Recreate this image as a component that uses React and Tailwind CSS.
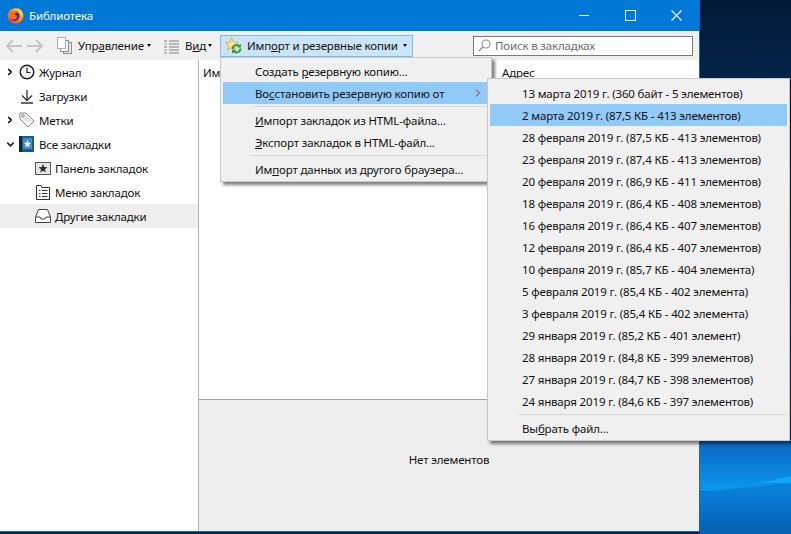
import { ChevronRight, ChevronDown } from 'lucide-react'

const backups = [
  '13 марта 2019 г. (360 байт - 5 элементов)',
  '2 марта 2019 г. (87,5 КБ - 413 элементов)',
  '28 февраля 2019 г. (87,5 КБ - 413 элементов)',
  '23 февраля 2019 г. (87,4 КБ - 413 элементов)',
  '20 февраля 2019 г. (86,9 КБ - 411 элементов)',
  '18 февраля 2019 г. (86,4 КБ - 408 элементов)',
  '16 февраля 2019 г. (86,4 КБ - 407 элементов)',
  '12 февраля 2019 г. (86,4 КБ - 407 элементов)',
  '10 февраля 2019 г. (85,7 КБ - 404 элемента)',
  '5 февраля 2019 г. (85,4 КБ - 402 элемента)',
  '3 февраля 2019 г. (85,4 КБ - 402 элемента)',
  '29 января 2019 г. (85,2 КБ - 401 элемент)',
  '28 января 2019 г. (84,8 КБ - 399 элементов)',
  '27 января 2019 г. (84,7 КБ - 398 элементов)',
  '24 января 2019 г. (84,6 КБ - 397 элементов)',
]

function FirefoxLogo() {
  return (
    <svg width="17" height="17" viewBox="0 0 18 18">
      <defs>
        <linearGradient id="fx" x1="0.8" y1="0" x2="0.2" y2="1">
          <stop offset="0" stopColor="#ffd52e" />
          <stop offset="0.55" stopColor="#ff8a1f" />
          <stop offset="1" stopColor="#f0343c" />
        </linearGradient>
      </defs>
      <circle cx="9" cy="9.5" r="8.300" fill="url(#fx)" />
      <circle cx="8" cy="9.5" r="5.200" fill="#4a2a9a" />
      <path d="M2 6 C4 3 9 3 11 6 C9 6 7.500 7 8 8 C10 8.500 11 9.500 10.500 11 C9.500 13.500 5.500 14 3.500 12 C2 10.500 1.500 8 2 6Z" fill="#ff6d1a" />
      <path d="M11 0.800 C15 3 17.500 6 17 10.500 C15.500 7 13.500 3.500 11 0.800Z" fill="#ffe14a" />
    </svg>
  )
}

function DesktopGlow() {
  return (
    <svg className="absolute bottom-0 right-0" width="91" height="93" viewBox="0 0 91 93">
      <defs>
        <linearGradient id="sky" x1="0" y1="0" x2="0" y2="1">
          <stop offset="0" stopColor="#0a66c2" />
          <stop offset="1" stopColor="#0a98ee" />
        </linearGradient>
        <linearGradient id="floor" x1="0" y1="0" x2="0" y2="1">
          <stop offset="0" stopColor="#0a84e0" />
          <stop offset="1" stopColor="#055fb0" />
        </linearGradient>
      </defs>
      <rect width="91" height="50" fill="url(#sky)" />
      <path d="M0 51 91 42V93H0Z" fill="url(#floor)" />
      <path d="M60 42 91 35V42Z" fill="#14b0ff" opacity="0.7" />
    </svg>
  )
}

function WindowControls() {
  return (
    <div className="ml-auto flex h-full">
      <div className="flex h-full w-[46px] items-center justify-center">
        <div className="h-px w-[10px] bg-white" />
      </div>
      <div className="flex h-full w-[46px] items-center justify-center">
        <div className="h-[11px] w-[11px] border border-white" />
      </div>
      <div className="flex h-full w-[46px] items-center justify-center">
        <svg width="11" height="11" viewBox="0 0 11 11" stroke="#fff" strokeWidth="1.100">
          <path d="M0.500 0.500 10.500 10.500M10.500 0.500 0.500 10.500" />
        </svg>
      </div>
    </div>
  )
}

function NavArrow({ flip }) {
  return (
    <svg width="17" height="14" viewBox="0 0 17 14" fill="none" stroke="#c4c4c4" strokeWidth="1.800" className={flip ? 'rotate-180' : ''}>
      <path d="M17 7H2M8 1 2 7l6 6" />
    </svg>
  )
}

function PagesIcon() {
  return (
    <svg width="15" height="17" viewBox="0 0 15 17" fill="#fff" stroke="#8f8f8f">
      <rect x="6.500" y="5.500" width="8" height="11" fill="#e8e8e8" />
      <rect x="3.500" y="3.500" width="8" height="11" fill="#f2f2f2" />
      <rect x="0.500" y="0.500" width="8" height="11" stroke="#b0b0b0" />
    </svg>
  )
}

function ViewsIcon() {
  const rows = [2, 5, 8, 11, 14]
  return (
    <svg width="15" height="16" viewBox="0 0 15 16">
      {rows.map((y, i) => (
        <g key={y}>
          <rect x="0" y={y} width="3" height="2" fill={['#e0a0a0', '#c0d0a0', '#a0b8d8', '#d8b0d0', '#b0c8b0'][i]} />
          <rect x="5" y={y} width="10" height="2" fill="#b5b5b5" />
        </g>
      ))}
    </svg>
  )
}

function ImportIcon() {
  return (
    <svg width="17" height="17" viewBox="0 0 17 17">
      <path d="M6.500 0.500 8.500 5 13 5.500 9.500 8.500 10.500 13 6.500 10.500 2.500 13 3.500 8.500 0.500 5.500 5 5Z" fill="#fbe58c" stroke="#c9a94a" strokeWidth="0.800" />
      <path d="M7.500 12a4 4 0 0 1 7-2.500" fill="none" stroke="#2e9a2e" strokeWidth="2" />
      <path d="M15.500 11.500a4 4 0 0 1-7 2.500" fill="none" stroke="#2e9a2e" strokeWidth="2" />
      <path d="M15.800 6.500v4h-3.800ZM7 16.800v-4h3.800Z" fill="#2e9a2e" />
    </svg>
  )
}

function Caret() {
  return <span className="block h-0 w-0 border-x-[2.500px] border-t-[3px] border-x-transparent border-t-black" />
}

function ClockIcon() {
  return (
    <svg width="16" height="16" viewBox="0 0 16 16" fill="#f5f5f5" stroke="#222">
      <circle cx="8" cy="8" r="6.800" strokeWidth="1.500" />
      <path d="M8 3.500V8.500H11.500" fill="none" strokeWidth="1.200" />
    </svg>
  )
}

function DownloadIcon() {
  return (
    <svg width="14" height="15" viewBox="0 0 14 15" fill="none" stroke="#333" strokeWidth="1.300">
      <path d="M7 1V11M2 6.500 7 11.500 12 6.500M1 14H13" />
    </svg>
  )
}

function TagIcon() {
  return (
    <svg width="16" height="16" viewBox="0 0 16 16" fill="#f4f4f4" stroke="#8c8c8c">
      <path d="M1 1H7L15 9 9 15 1 7Z" />
      <circle cx="4" cy="4" r="1.300" fill="#fff" />
      <path d="M6 6 10 10M8 5 12 9" stroke="#c4c4c4" />
    </svg>
  )
}

function BookIcon() {
  return (
    <svg width="15" height="16" viewBox="0 0 15 16">
      <rect x="0" y="0" width="15" height="16" fill="#1d5a8c" />
      <rect x="0" y="0" width="3" height="16" fill="#10253c" />
      <rect x="4" y="2" width="9" height="11" fill="#3f8fcb" />
      <path d="M8.500 4 9.500 6.800 12 7 10 8.700 10.800 11.300 8.500 9.800 6.200 11.300 7 8.700 5 7 7.500 6.800Z" fill="#fff" />
    </svg>
  )
}

function PanelIcon() {
  return (
    <svg width="16" height="13" viewBox="0 0 16 13" fill="none" stroke="#555">
      <rect x="0.500" y="0.500" width="15" height="12" fill="#e6e6e6" />
      <path d="M8 2 9.300 5 12.500 5.300 10 7.300 10.800 10.500 8 8.800 5.200 10.500 6 7.300 3.500 5.300 6.700 5Z" fill="#333" stroke="none" />
    </svg>
  )
}

function MenuIcon() {
  return (
    <svg width="14" height="15" viewBox="0 0 14 15" fill="none" stroke="#333">
      <path d="M0.500 14.500V0.500H5L6 2.500H13.500V14.500Z" fill="#fff" />
      <path d="M3 5.500H4.500M6 5.500H11.500M3 8.500H4.500M6 8.500H11.500M3 11.500H4.500M6 11.500H11.500" />
    </svg>
  )
}

function TrayIcon() {
  return (
    <svg width="16" height="14" viewBox="0 0 16 14" fill="none" stroke="#444">
      <path d="M0.500 8 3.500 0.500H12.500L15.500 8V13.500H0.500Z" fill="#fff" />
      <path d="M0.500 8H5L6 10H10L11 8H15.500" />
    </svg>
  )
}

function SideRow({ twisty, icon, label, child, selected }) {
  return (
    <div className={`flex h-6 items-center ${child ? 'pl-[35px]' : 'pl-[5px]'} ${selected ? 'bg-[#eeeeee]' : ''}`}>
      {!child && (
        <span className="flex w-[13px] items-center">
          {twisty === 'right' && <ChevronRight size={10} strokeWidth={4} className="text-black" />}
          {twisty === 'down' && <ChevronDown size={11} strokeWidth={3.500} className="text-[#222]" />}
        </span>
      )}
      <span className={`flex items-center justify-center ${child ? 'w-[16px]' : 'w-[17px]'}`}>{icon}</span>
      <span className="ml-[4px] pt-px">{label}</span>
    </div>
  )
}

function MenuRow({ children, active, arrow, inset }) {
  return (
    <div className={`flex h-[22px] items-center ${inset} ${active ? 'bg-[#91c9f7]' : ''}`}>
      <span className="pt-px">{children}</span>
      {arrow && <ChevronRight size={12} strokeWidth={2} className="ml-auto mr-[5px] text-[#444]" />}
    </div>
  )
}

function MainMenu() {
  const inset = 'pl-[32px]'
  return (
    <div className="absolute left-[220px] top-[57px] w-[272px] border border-[#c8c8c8] bg-[#f0f0f0] px-[2px] pb-px pt-[2px] shadow-[3px_3px_3px_rgba(0,0,0,0.5)]">
      <MenuRow inset={inset}>Создать <u>р</u>езервную копию...</MenuRow>
      <MenuRow inset={inset} active arrow>Во<u>с</u>становить резервную копию от</MenuRow>
      <div className="ml-[28px] py-[2px]"><div className="h-px bg-[#d7d7d7]" /></div>
      <MenuRow inset={inset}><u>И</u>мпорт закладок из HTML-файла...</MenuRow>
      <MenuRow inset={inset}><u>Э</u>кспорт закладок в HTML-файл...</MenuRow>
      <div className="ml-[28px] py-[2px]"><div className="h-px bg-[#d7d7d7]" /></div>
      <MenuRow inset={inset}>Им<u>п</u>орт данных из другого браузера...</MenuRow>
    </div>
  )
}

function BackupMenu() {
  const inset = 'pl-[32px]'
  return (
    <div className="absolute left-[487px] top-[78px] w-[303px] border border-[#c8c8c8] bg-[#f0f0f0] px-[2px] pb-px pt-[3px] shadow-[3px_3px_3px_rgba(0,0,0,0.5)]">
      {backups.map((b, i) => (
        <MenuRow key={b} inset={inset} active={i === 1}>{b}</MenuRow>
      ))}
      <div className="ml-[28px] py-[2px]"><div className="h-px bg-[#d7d7d7]" /></div>
      <MenuRow inset={inset}>Вы<u>б</u>рать файл...</MenuRow>
    </div>
  )
}

export default function App() {
  return (
    <div className="relative h-[534px] w-[791px] overflow-hidden bg-gradient-to-b from-[#021a38] to-[#0a5cb0] font-['Noto_Sans','Open_Sans',sans-serif] text-[11.5px] tracking-[-0.16px] text-[#111]">
      <DesktopGlow />
      <div className="relative flex h-[532px] w-[700px] flex-col border-b border-r border-[#0f6cbd] bg-[#f0f0f0]">
        <div className="flex h-[31px] shrink-0 items-center bg-[#0078d7] pl-[7px] text-white">
          <FirefoxLogo />
          <span className="ml-[5px]">Библиотека</span>
          <WindowControls />
        </div>

        <div className="flex h-[29px] shrink-0 items-center whitespace-nowrap bg-[#f0f0f0] pl-[5px]">
          <NavArrow />
          <span className="ml-[5px]"><NavArrow flip /></span>
          <span className="ml-[13px]"><PagesIcon /></span>
          <span className="ml-[6px] w-[66px] pt-px">Упр<u>а</u>вление</span>
          <span className="ml-[3px]"><Caret /></span>
          <span className="ml-[13px]"><ViewsIcon /></span>
          <span className="ml-[6px] w-[20px] pt-px">В<u>и</u>д</span>
          <span className="ml-[3px]"><Caret /></span>
          <div className="ml-[8px] flex h-[22px] w-[193px] shrink-0 items-center border border-[#7cbdf0] bg-[#cce4f7] pl-[4px]">
            <ImportIcon />
            <span className="ml-[5px] w-[153px] pt-px">Имп<u>о</u>рт и резервные копии</span>
            <span className="ml-[3px]"><Caret /></span>
          </div>
          <div className="ml-[60px] flex h-[20px] w-[220px] shrink-0 items-center border border-[#7a7a7a] bg-white pl-[4px] text-[#6d6d6d]">
            <svg width="13" height="13" viewBox="0 0 13 13" fill="none" stroke="#888" strokeWidth="1.100">
              <circle cx="8" cy="5" r="4" />
              <path d="M5 8 0.800 12.200" />
            </svg>
            <span className="ml-[4px] pt-px">Поиск в закладках</span>
          </div>
        </div>

        <div className="flex min-h-0 flex-1">
          <div className="w-[198px] shrink-0 bg-white">
            <SideRow twisty="right" icon={<ClockIcon />} label="Журнал" />
            <SideRow icon={<DownloadIcon />} label="Загрузки" />
            <SideRow twisty="right" icon={<TagIcon />} label="Метки" />
            <SideRow twisty="down" icon={<BookIcon />} label="Все закладки" />
            <SideRow child icon={<PanelIcon />} label="Панель закладок" />
            <SideRow child icon={<MenuIcon />} label="Меню закладок" />
            <SideRow child selected icon={<TrayIcon />} label="Другие закладки" />
          </div>
          <div className="flex min-w-0 flex-1 flex-col border-l border-[#a3b6c9]">
            <div className="h-[340px] shrink-0 border-b border-[#a0a0a0] bg-white">
              <div className="flex h-6 items-center pt-px">
                <span className="ml-[4px] w-[299px]">Имя</span>
                <span>Адрес</span>
              </div>
            </div>
            <div className="flex flex-1 justify-center bg-[#eeeeee] pt-[51px]">
              <span>Нет элементов</span>
            </div>
          </div>
        </div>
      </div>
      <div className="h-[2px] w-[700px] bg-[#08223f]" />
      <MainMenu />
      <BackupMenu />
    </div>
  )
}
